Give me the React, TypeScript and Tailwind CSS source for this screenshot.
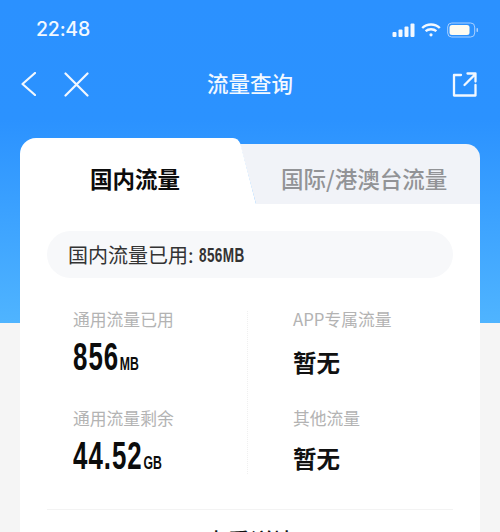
import React from 'react';

const CJK = "font-['Noto_Sans_CJK_SC','Noto_Sans',sans-serif]";
const NUM = "font-['Liberation_Sans',sans-serif]";

const StatusIcons: React.FC = () => (
  <div className="flex items-center gap-[6px]">
    <svg width="23" height="14" viewBox="0 0 23 14" fill="#f2f8ff">
      <rect x="0.5" y="9" width="4" height="5" rx="1" />
      <rect x="6.5" y="6.5" width="4" height="7.5" rx="1" />
      <rect x="12.5" y="3.5" width="4" height="10.5" rx="1" />
      <rect x="18.5" y="0.5" width="4" height="13.5" rx="1" />
    </svg>
    <svg width="20" height="14" viewBox="0 0 20 14" fill="none" stroke="#f2f8ff" strokeWidth="2.4">
      <path d="M1.2 5 C6 0.4 14 0.4 18.8 5" />
      <path d="M4.6 8.2 C7.6 5.6 12.4 5.6 15.4 8.2" />
      <circle cx="10" cy="11.8" r="1.6" fill="#f2f8ff" stroke="none" />
    </svg>
    <svg width="32" height="16" viewBox="0 0 32 16" fill="none">
      <rect x="0.7" y="1" width="27" height="14" rx="4" stroke="#a9d0ff" strokeWidth="1" />
      <rect x="2.5" y="3" width="20" height="10" rx="2.5" fill="#fdfbf0" />
      <rect x="29.5" y="6" width="1.5" height="4" rx="0.7" fill="#a9d0ff" />
    </svg>
  </div>
);

const Stat: React.FC<{ label: string; value?: string; unit?: string; tight?: boolean }> = ({ label, value, unit, tight }) => (
  <div className="flex flex-col">
    <div className={`${CJK} text-[16.8px] leading-[24px] text-[#b3b3b3] whitespace-nowrap`}>{label}</div>
    {value ? (
      <div className={`${NUM} mt-[5px] h-[42px] flex items-end font-bold text-[#0c0c0c] origin-left scale-x-[.68] whitespace-nowrap`}>
        <span className="text-[38px] leading-[42px] tracking-[1.5px]">{value}</span>
        <span className="text-[18px] leading-[22px] mb-[3px] ml-[1px]">{unit}</span>
      </div>
    ) : (
      <div className={`${CJK} ${tight ? 'mt-[3px]' : 'mt-[6px]'} h-[42px] flex items-end text-[23.5px] leading-[34px] font-bold text-[#111]`}>暂无</div>
    )}
  </div>
);

export default function App() {
  return (
    <div className="w-[500px] h-[532px] overflow-hidden bg-[linear-gradient(#2b91ff_0,#2b92ff_120px,#4fb4ff_323px,#f5f5f5_323px)]">
      {/* status bar */}
      <div className="h-[60px] pl-[36px] pr-[21px] flex items-center justify-between">
        <span className="font-['Inter',sans-serif] text-[19.5px] font-medium tracking-[-0.2px] text-[#f2f8ff]">22:48</span>
        <StatusIcons />
      </div>

      {/* nav */}
      <div className="h-[48px] px-[21px] flex items-center">
        <div className="flex-1 flex items-center gap-[28px]">
          <svg width="15" height="24" viewBox="0 0 15 24" fill="none" stroke="#f2f8ff" strokeWidth="2.2" strokeLinecap="round" strokeLinejoin="round">
            <path d="M14 1 L1.5 12 L14 23" />
          </svg>
          <svg width="25" height="25" viewBox="0 0 25 25" fill="none" stroke="#f2f8ff" strokeWidth="2.2" strokeLinecap="round">
            <path d="M1.5 1.5 L23.5 23.5 M23.5 1.5 L1.5 23.5" />
          </svg>
        </div>
        <span className={`${CJK} text-[21.5px] leading-[30px] mb-[2px] font-medium text-[#f2f8ff]`}>流量查询</span>
        <div className="flex-1 flex justify-end">
          <svg className="mr-[2px]" width="25" height="25" viewBox="0 0 25 25" fill="none" stroke="#f2f8ff" strokeWidth="2.3" strokeLinecap="round" strokeLinejoin="round">
            <path d="M9 3 H2 V23.5 H23.5 V13" />
            <path d="M12.5 13 L23 2.5 M15.5 1.5 H23.5 V9.5" />
          </svg>
        </div>
      </div>

      {/* card */}
      <div className="mx-5 mt-[30px]">
        <div className="flex h-[66px]">
          <div className={`${CJK} w-[204px] bg-white rounded-tl-[16px] pt-[10px] pl-[70px] text-[22.5px] leading-[60px] font-bold text-[#0c0c0c]`}>
            <span className="whitespace-nowrap">国内流量</span>
          </div>
          <svg width="32" height="66" viewBox="0 0 32 66" className="shrink-0">
            <path d="M16 6 H32 V66 Z" fill="#f1f3f8" />
            <path d="M0 0 H9 Q14 0 16.5 6 L32 66 H0 Z" fill="#fff" />
          </svg>
          <div className={`${CJK} flex-1 mt-[6px] bg-[#f1f3f8] rounded-tr-[14px] pl-[25px] text-[22.5px] leading-[68px] font-medium text-[#929396] whitespace-nowrap`}>
            国际/港澳台流量
          </div>
        </div>

        <div className="bg-white px-[27px] pt-[27px]">
          <div className="h-[47px] rounded-full bg-[#f7f8fa] pl-[21px] flex items-center text-[#333]">
            <span className={`${CJK} text-[20px]`}>国内流量已用:</span>
            <span className={`${NUM} ml-[5px] text-[20px] tracking-[0.5px] font-bold origin-left scale-x-[.68]`}>856MB</span>
          </div>

          <div className="relative mt-[29px] h-[202px] pl-[26px] grid grid-cols-[220px_1fr] gap-y-[27px] content-start">
            <div className="absolute left-[200px] top-[4px] h-[163px] border-l border-dotted border-[#f0f0f0]" />
            <Stat label="通用流量已用" value="856" unit="MB" />
            <Stat label="APP专属流量" />
            <Stat label="通用流量剩余" value="44.52" unit="GB" />
            <Stat label="其他流量" tight />
          </div>

          <div className="border-t border-[#f3f3f3] pt-[14px] text-center">
            <span className={`${CJK} text-[22.5px] font-medium text-[#111]`}>查看详情</span>
          </div>
        </div>
      </div>
    </div>
  );
}
